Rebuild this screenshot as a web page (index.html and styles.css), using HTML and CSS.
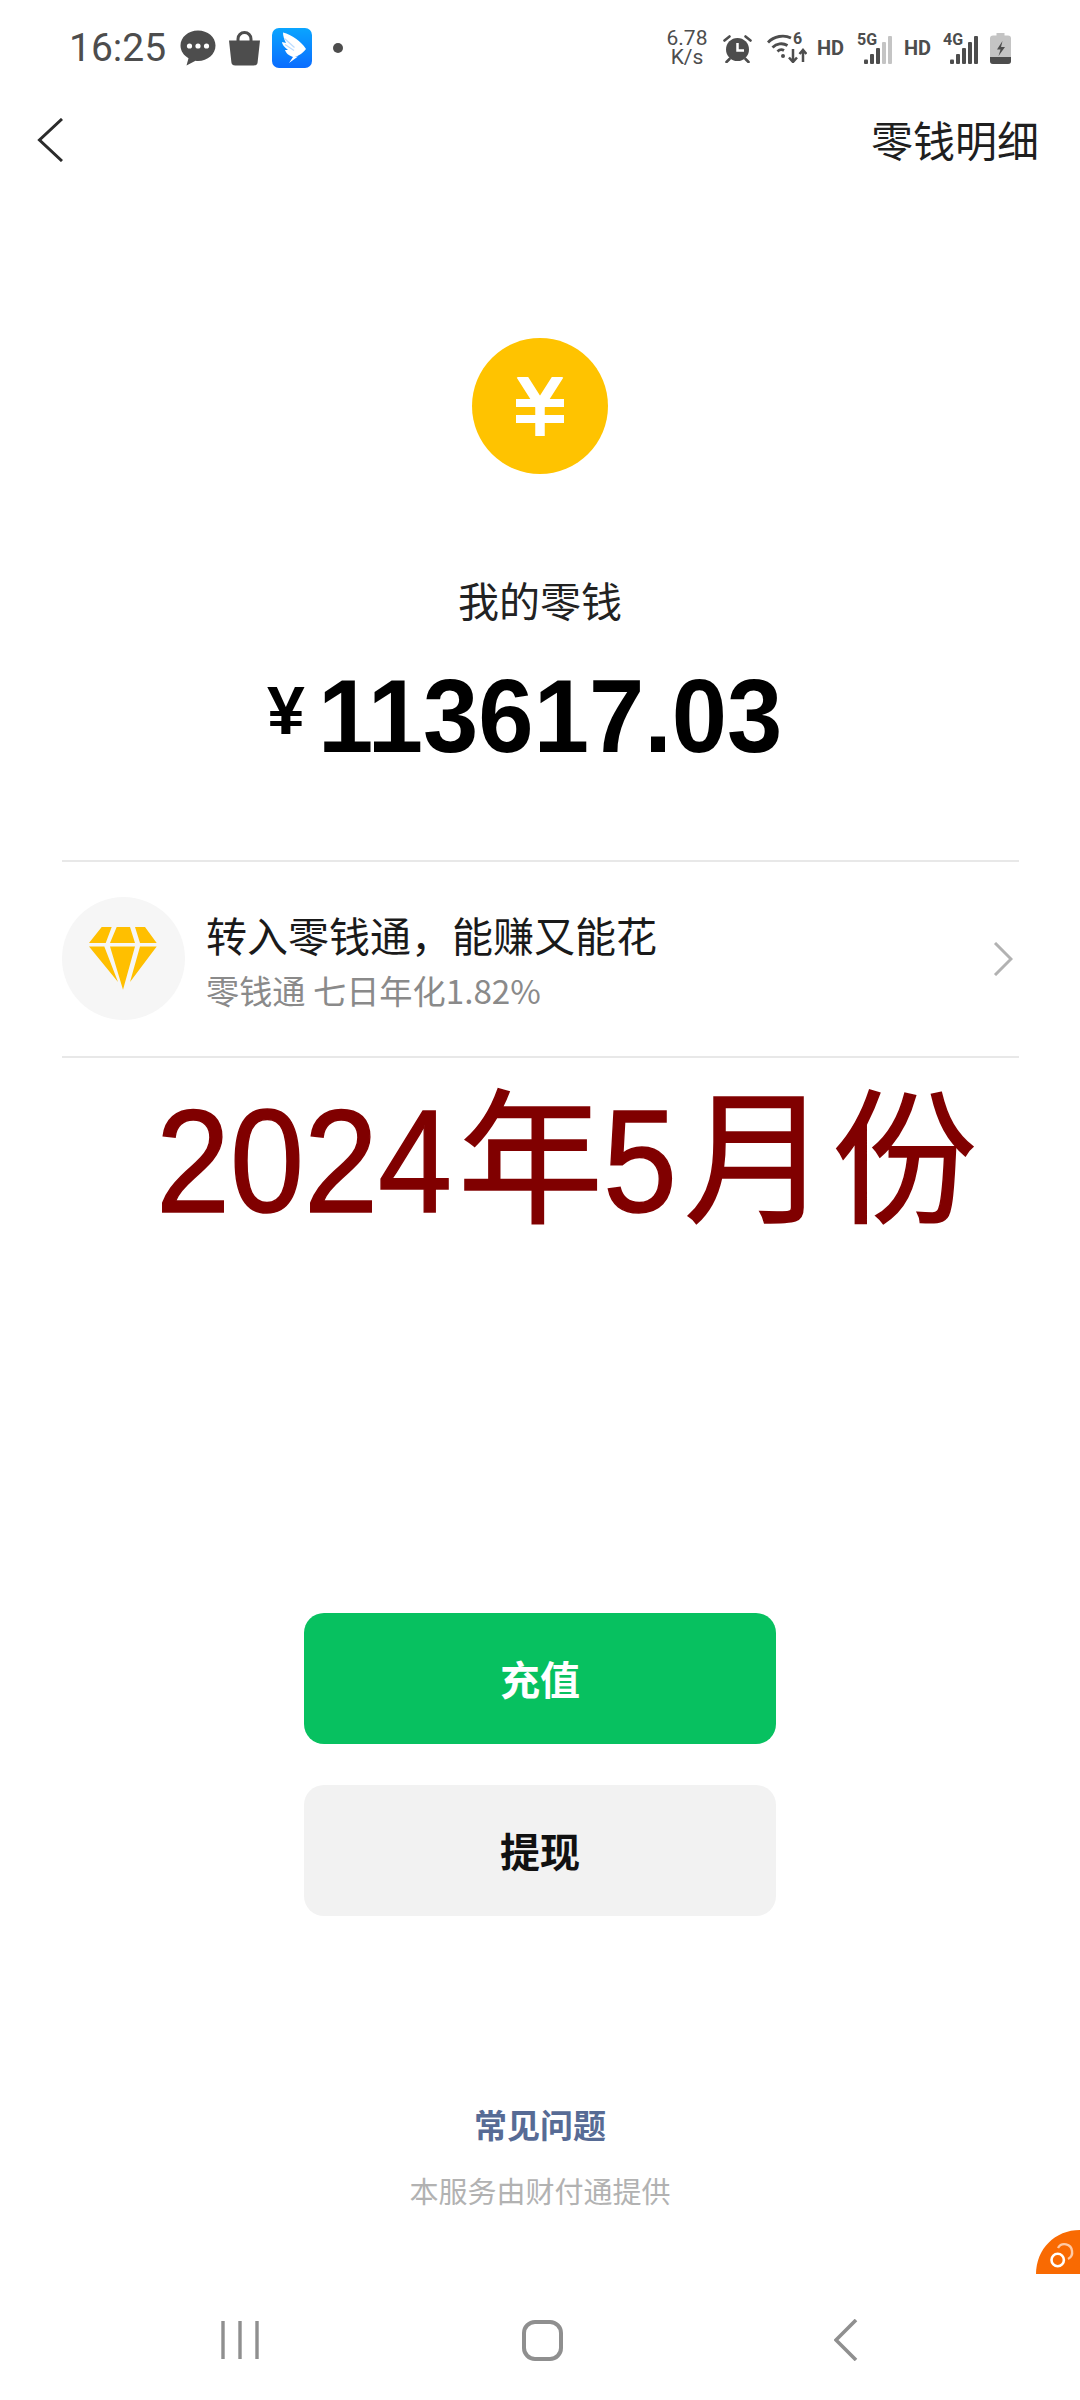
FILE: index.html
```html
<!DOCTYPE html>
<html lang="zh-CN">
<head>
<meta charset="utf-8">
<title>我的零钱</title>
<link rel="stylesheet" href="styles.css">
</head>
<body>
<div class="page">
  <header class="status">
    <div class="status-left">
      <span class="time">16:25</span>
      <svg class="ic-chat" viewBox="0 0 36 36"><path d="M18 .5C8.300.5.500 7.200.500 15.500c0 5.300 3.200 10 8 12.700L6.500 35.500l9-4.700c.8.100 1.700.2 2.500.2 9.700 0 17.500-6.900 17.500-15.500S27.700.5 18 .5z" fill="#4d4d4d"/><circle cx="9.500" cy="16" r="2.600" fill="#fff"/><circle cx="18" cy="16" r="2.600" fill="#fff"/><circle cx="26.500" cy="16" r="2.600" fill="#fff"/></svg>
      <svg class="ic-bag" viewBox="0 0 33 35"><path d="M10 11V8a6.500 6.500 0 0 1 13 0v3" fill="none" stroke="#4d4d4d" stroke-width="3"/><path d="M1 9.500h31l-2.300 21a4 4 0 0 1-4 4H7.300a4 4 0 0 1-4-4z" fill="#4d4d4d"/></svg>
      <svg class="ic-app" viewBox="0 0 40 40"><defs><linearGradient id="appg" x1="0" y1="0" x2="0" y2="1"><stop offset="0" stop-color="#0aa5ff"/><stop offset="1" stop-color="#0a6cff"/></linearGradient></defs><rect width="40" height="40" rx="7" fill="url(#appg)"/><path d="M11 4.500C20 7 29 13 34 21c-4 5-8 7-11 8l3-.5L17 35l4-6c-5-2-7-4-8-7h3c-4-3-6-6-6-8l4 1c-2-4-3-7-3-10.500z" fill="#fff"/><path d="M12.500 10.500l10 9M13 16.500l9 6" stroke="#bcdcff" stroke-width="1.200" fill="none"/></svg>
      <span class="dot"></span>
    </div>
    <div class="status-right">
      <span class="speed">6.78<br>K/s</span>
      <svg class="ic-alarm" viewBox="0 0 29 29"><circle cx="14.500" cy="15.500" r="11.500" fill="#4d4d4d"/><path d="M1.500 6.500l5-4M27.500 6.500l-5-4M6.500 25l-3 3M22.500 25l3 3" stroke="#4d4d4d" stroke-width="2.600" stroke-linecap="round"/><path d="M14.500 9v7.500h6.500" fill="none" stroke="#fff" stroke-width="2.500"/></svg>
      <div class="wifi">
        <svg class="ic-wifi" viewBox="0 0 40 30"><path d="M1 9.500C7 3 17 1.500 24 5M5.500 14.500c4-4 10-5 15-2M10.500 18.500c2-2 4.500-2.200 6.500-1" fill="none" stroke="#4d4d4d" stroke-width="2.800"/><circle cx="16" cy="23" r="2" fill="#4d4d4d"/><path d="M26 16v13M22 24.500l4 4.500 4-4.500M36 29V17M32.500 21l3.500-4 3.500 4" fill="none" stroke="#4d4d4d" stroke-width="2.500"/></svg>
        <span class="wifi-6">6</span>
      </div>
      <span class="hd hd-a">HD</span>
      <div class="sim sim-a">
        <span class="sim-label">5G</span>
        <svg class="bars" viewBox="0 0 28 28"><rect x="0" y="23.500" width="4" height="4.500" rx="1" fill="#4d4d4d"/><rect x="6" y="18" width="4" height="10" rx="1" fill="#4d4d4d"/><rect x="12" y="12" width="4" height="16" rx="1" fill="#4d4d4d"/><rect x="18" y="6" width="4" height="22" rx="1" fill="#c4c4c4"/><rect x="24" y="0" width="4" height="28" rx="1" fill="#c4c4c4"/></svg>
      </div>
      <span class="hd hd-b">HD</span>
      <div class="sim sim-b">
        <span class="sim-label">4G</span>
        <svg class="bars" viewBox="0 0 28 28"><rect x="0" y="23.500" width="4" height="4.500" rx="1" fill="#4d4d4d"/><rect x="6" y="18" width="4" height="10" rx="1" fill="#4d4d4d"/><rect x="12" y="12" width="4" height="16" rx="1" fill="#4d4d4d"/><rect x="18" y="6" width="4" height="22" rx="1" fill="#4d4d4d"/><rect x="24" y="0" width="4" height="28" rx="1" fill="#4d4d4d"/></svg>
      </div>
      <svg class="ic-batt" viewBox="0 0 21 31"><path d="M6.500 0h8v2.500h3.500a3 3 0 0 1 3 3V28a3 3 0 0 1-3 3H3a3 3 0 0 1-3-3V5.500a3 3 0 0 1 3-3h3.500z" fill="#c4c4c4"/><path d="M0 24h21v4a3 3 0 0 1-3 3H3a3 3 0 0 1-3-3z" fill="#4d4d4d"/><path d="M12.500 8L7 16.500h3.500L8.500 23l6.500-9h-4z" fill="#4d4d4d"/></svg>
    </div>
  </header>

  <nav class="topbar">
    <svg class="back" viewBox="0 0 26 44"><path d="M25 1L2.500 22 25 43" fill="none" stroke="#2b2b2b" stroke-width="3"/></svg>
    <span class="detail">零钱明细</span>
  </nav>

  <section class="hero">
    <div class="coin">
      <svg class="coin-y" viewBox="0 0 48 59"><path d="M5 -2L24 28 43 -2" fill="none" stroke="#fff" stroke-width="10"/><path d="M24 24v35" fill="none" stroke="#fff" stroke-width="9.500"/><path d="M0 26h48M0 42h48" fill="none" stroke="#fff" stroke-width="8"/></svg>
    </div>
    <div class="label">我的零钱</div>
    <div class="amount"><span class="yen">¥</span><span class="num">113617.03</span></div>
  </section>

  <section class="promo">
    <div class="gem-wrap">
      <svg class="gem" viewBox="0 0 68 63"><path d="M12.700 0h10l-6 16H0zM27.700 0H41l5 16H21zM46 0h10l11.700 16H51z" fill="#ffbf00"/><path d="M0 19.400h15.300L29 55zM21 19.400h25L34 62.700zM51 19.400h16.700L41 55z" fill="#ffbf00"/></svg>
    </div>
    <div class="promo-text">
      <div class="promo-title">转入零钱通，能赚又能花</div>
      <div class="promo-sub">零钱通 七日年化1.82%</div>
    </div>
    <svg class="chev" viewBox="0 0 20 34"><path d="M2 1l16 16L2 33" fill="none" stroke="#b2b2b2" stroke-width="3"/></svg>
  </section>

  <div class="stamp">
    <span class="s-d s-d4">2024</span>
    <span class="s-c s-nian">年</span>
    <span class="s-d s-d1">5</span>
    <span class="s-c s-yue">月</span>
    <span class="s-c s-fen">份</span>
  </div>

  <section class="actions">
    <button class="btn btn-green">充值</button>
    <button class="btn btn-gray">提现</button>
  </section>

  <footer class="foot">
    <div class="faq">常见问题</div>
    <div class="provider">本服务由财付通提供</div>
  </footer>

  <nav class="sysnav">
    <svg class="nav-recent" viewBox="0 0 38 38"><path d="M2 0v38M19 0v38M36 0v38" stroke="#8f8f8f" stroke-width="3.400" stroke-linecap="round" fill="none"/></svg>
    <svg class="nav-home" viewBox="0 0 41 41"><rect x="2" y="2" width="37" height="37" rx="11" fill="none" stroke="#8f8f8f" stroke-width="4"/></svg>
    <svg class="nav-back" viewBox="0 0 24 42"><path d="M22 1L2 21l20 20" fill="none" stroke="#8f8f8f" stroke-width="3.600"/></svg>
  </nav>

  <div class="float-badge">
    <svg viewBox="0 0 45 44"><path d="M45 0v44H1C1 19 20 0 45 0z" fill="#f96a02"/><path d="M23 18a7.500 7.500 0 0 1 14 3 7.500 7.500 0 0 1-4 8" fill="none" stroke="#ffc9a5" stroke-width="2.400"/><circle cx="22.700" cy="30" r="6.200" fill="none" stroke="#fff" stroke-width="2.600"/></svg>
  </div>
</div>
</body>
</html>
```
FILE: styles.css
```css
* { box-sizing: border-box; }
html, body { margin: 0; padding: 0; background: #fff; }
.page {
  position: relative;
  width: 1080px;
  height: 2400px;
  overflow: hidden;
  font-family: "Noto Sans CJK SC", "Liberation Sans", sans-serif;
  color: #1a1a1a;
}

.status {
  height: 96px;
  display: flex;
  justify-content: space-between;
  align-items: flex-start;
  padding: 28px 69px 0 69px;
}
.status-left { display: flex; align-items: center; height: 40px; }
.time { font: 400 39px/40px Roboto, sans-serif; color: #4d4d4d; width: 111px; }
.ic-chat { width: 36px; height: 36px; }
.ic-bag { width: 33px; height: 35px; margin-left: 12px; }
.ic-app { width: 40px; height: 40px; margin-left: 11px; }
.dot { width: 10px; height: 10px; border-radius: 50%; background: #4d4d4d; margin-left: 21px; }
.status-right { display: flex; align-items: center; height: 40px; }
.speed { font: 400 21px/19px Roboto, sans-serif; color: #4d4d4d; text-align: center; width: 42px; }
.ic-alarm { width: 29px; height: 29px; margin-left: 15px; }
.wifi { position: relative; width: 40px; height: 30px; margin-left: 15px; }
.ic-wifi { display: block; width: 40px; height: 30px; }
.wifi-6 { position: absolute; left: 26px; top: -1px; font: 700 16px/14px Roboto, sans-serif; color: #4d4d4d; }
.hd { font: 700 20px/24px Roboto, sans-serif; color: #4d4d4d; width: 26px; white-space: nowrap; }
.hd-a { margin-left: 10px; }
.hd-b { margin-left: 12px; }
.sim { position: relative; width: 35px; height: 31px; }
.sim-a { margin-left: 14px; }
.sim-b { margin-left: 13px; }
.sim-label { position: absolute; left: 0; top: 0; font: 700 16px/14px Roboto, sans-serif; color: #4d4d4d; }
.bars { position: absolute; right: 0; bottom: 0; width: 28px; height: 28px; }
.ic-batt { width: 21px; height: 31px; margin-left: 12px; }

.topbar {
  height: 56px;
  margin-top: 16px;
  display: flex;
  justify-content: space-between;
  align-items: center;
  padding: 0 41px 0 37px;
}
.back { width: 26px; height: 44px; }
.detail { font-size: 42px; line-height: 54px; padding-bottom: 2px; color: #1f1f1f; }

.hero { display: flex; flex-direction: column; align-items: center; padding-top: 170px; }
.coin {
  width: 136px;
  height: 136px;
  border-radius: 50%;
  background: #ffc300;
  display: flex;
  align-items: center;
  justify-content: center;
}
.coin-y { width: 48px; height: 59px; }
.label { font-size: 41px; line-height: 56px; margin-top: 97px; color: #222; }
.amount {
  display: flex;
  align-items: flex-start;
  height: 120px;
  margin: 30px 26px 0 0;
  font-family: "Liberation Sans", sans-serif;
  font-weight: 700;
  color: #000;
}
.yen { font-size: 68px; line-height: 68px; margin-top: 19px; margin-right: 13px; }
.num {
  display: inline-block;
  width: 469px;
  font-size: 103px;
  line-height: 120px;
  white-space: nowrap;
  transform: scaleX(.965);
  transform-origin: left;
}

.promo {
  width: 957px;
  height: 198px;
  margin: 83px 0 0 62px;
  padding: 0 6px 0 0;
  border-top: 2px solid #e8e8e8;
  border-bottom: 2px solid #e8e8e8;
  display: flex;
  align-items: center;
}
.gem-wrap {
  width: 123px;
  height: 123px;
  margin-top: -2px;
  border-radius: 50%;
  background: #f6f6f6;
  display: flex;
  align-items: center;
  justify-content: center;
}
.gem { width: 68px; height: 63px; margin-left: -2px; }
.promo-text { flex: 1; margin-left: 21px; }
.promo-title { font-size: 41px; line-height: 56px; color: #1a1a1a; }
.promo-sub { font-size: 33.200px; line-height: 44px; color: #8a8a8a; margin-top: 6px; }
.chev { width: 20px; height: 34px; }

.stamp {
  display: flex;
  align-items: baseline;
  height: 190px;
  padding-left: 156px;
  line-height: 182px;
  color: #800000;
  white-space: nowrap;
  -webkit-text-stroke: 1.500px #800000;
}
.s-c { font-family: "Noto Sans CJK SC", sans-serif; font-size: 145px; }
.s-d {
  display: inline-block;
  font-family: "Liberation Sans", sans-serif;
  font-size: 147px;
  transform: scaleX(.905);
  transform-origin: left;
}
.s-d4 { width: 296px; }
.s-d1 { width: 74px; }
.s-nian { margin-left: 6px; }
.s-yue { margin-left: 7px; }
.s-fen { margin-left: 3px; }

.actions { display: flex; flex-direction: column; align-items: center; gap: 41px; margin-top: 365px; }
.btn {
  width: 472px;
  height: 131px;
  padding: 0 0 2px;
  border: 0;
  border-radius: 20px;
  font-family: "Noto Sans CJK SC", sans-serif;
  font-size: 40px;
  font-weight: 700;
}
.btn-green { background: #07c160; color: #fff; }
.btn-gray { background: #f2f2f2; color: #111; }

.foot { display: flex; flex-direction: column; align-items: center; margin-top: 184px; }
.faq { font-size: 33px; line-height: 48px; font-weight: 700; color: #576b95; }
.provider { font-size: 29px; line-height: 40px; color: #b2b2b2; margin-top: 22px; }

.sysnav {
  position: absolute;
  left: 0;
  right: 0;
  top: 2319px;
  height: 42px;
  display: flex;
  align-items: center;
}
.nav-recent { width: 38px; height: 38px; margin-left: 221px; }
.nav-home { width: 41px; height: 41px; margin-left: 263px; }
.nav-back { width: 24px; height: 42px; margin-left: 271px; }

.float-badge { position: absolute; right: 0; top: 2230px; width: 45px; height: 44px; }
.float-badge svg { display: block; width: 45px; height: 44px; }
```
